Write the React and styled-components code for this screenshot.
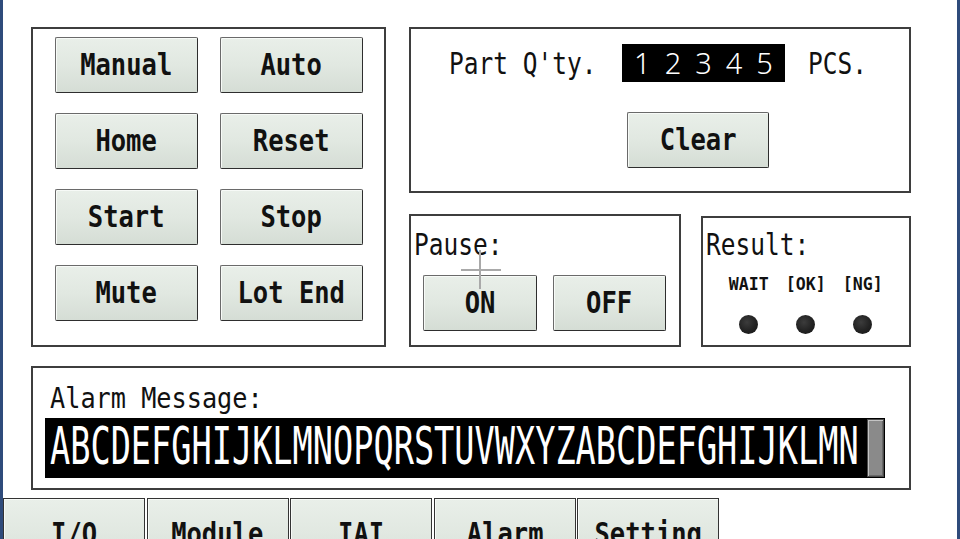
import React from 'react';
import styled, { createGlobalStyle, css } from 'styled-components';

const MONO = `"DejaVu Sans Mono", "Liberation Mono", monospace`;

const Global = createGlobalStyle`
  html, body { margin: 0; padding: 0; background: #fff; }
  body { font-family: ${MONO}; color: #111; }
  * { box-sizing: border-box; }
`;

const squeeze = css`
  display: inline-block;
  white-space: pre;
  font-family: ${MONO};
  transform-origin: ${p => p.$origin || 'center'};
`;

const Screen = styled.div`
  position: relative;
  width: 960px;
  height: 539px;
  overflow: hidden;
  background: #fff;
  border-left: 3px solid #2f4b7b;
  border-right: 3px solid #2f4b7b;
  display: flex;
  flex-direction: column;
`;

const Main = styled.div`
  display: grid;
  grid-template-columns: 355px 502px;
  grid-template-rows: 320px 124px;
  column-gap: 23px;
  row-gap: 19px;
  padding: 27px 0 0 28px;
`;

const Panel = styled.section`
  border: 2px solid #3e3e3e;
  background: #fff;
`;

const ControlPanel = styled(Panel)`
  display: grid;
  grid-template-columns: 143px 143px;
  grid-auto-rows: 56px;
  column-gap: 22px;
  row-gap: 20px;
  padding: 8px 22px 0 22px;
  align-content: start;
`;

const Button = styled.div`
  display: flex;
  align-items: center;
  justify-content: center;
  width: ${p => p.$w || 143}px;
  height: 56px;
  border: 1px solid #6a6a6a;
  border-right-color: #2e2e2e;
  border-bottom-color: #2e2e2e;
  border-radius: 2px;
  background: linear-gradient(#e9efe9 0%, #e1e8e1 50%, #d5ddd5 100%);
  box-shadow: inset 1px 1px 0 #f7faf7;
  overflow: hidden;
`;

const ButtonLabel = styled.span`
  ${squeeze};
  font-size: 30px;
  font-weight: 700;
  line-height: 34px;
  transform: scaleX(0.85);
`;

const RightColumn = styled.div`
  display: flex;
  flex-direction: column;
  gap: 21px;
`;

const QtyPanel = styled(Panel)`
  height: 166px;
  padding: 15px 0 0 38px;
  display: flex;
  flex-direction: column;
`;

const QtyRow = styled.div`
  display: flex;
  align-items: center;
  height: 38px;
`;

const FieldSlot = styled.div`
  width: ${p => p.$w}px;
  margin-left: ${p => p.$ml || 0}px;
  height: 38px;
  display: flex;
  align-items: center;
`;

const FieldLabel = styled.span`
  ${squeeze};
  font-size: 31px;
  line-height: 38px;
  transform: scaleX(0.79);
`;

const Counter = styled.div`
  width: 163px;
  height: 38px;
  margin-left: 25px;
  background: #000;
  color: #fff;
  display: flex;
  align-items: center;
  justify-content: center;
`;

const Digits = styled.span`
  font-family: "Noto Sans", "DejaVu Sans", sans-serif;
  font-weight: 300;
  font-size: 29px;
  line-height: 38px;
  letter-spacing: 14px;
  padding-left: 14px;
  white-space: pre;
`;

const ClearWrap = styled.div`
  margin: 30px 0 0 178px;
`;

const BottomRow = styled.div`
  display: flex;
  gap: 20px;
  flex: 1;
`;

const PausePanel = styled(Panel)`
  width: 272px;
  padding: 8px 0 0 3px;
  display: flex;
  flex-direction: column;
`;

const ResultPanel = styled(Panel)`
  width: 210px;
  margin-top: 2px;
  padding: 6px 0 0 3px;
  display: flex;
  flex-direction: column;
`;

const PanelTitle = styled.div`
  height: 40px;
  display: flex;
  align-items: center;
`;

const PauseButtons = styled.div`
  display: flex;
  gap: 16px;
  margin: 11px 0 0 9px;
`;

const Lamps = styled.div`
  display: grid;
  grid-template-columns: repeat(3, 57px);
  padding-left: 14px;
  margin-top: 10px;
  row-gap: 21px;
  justify-items: center;
`;

const LampLabel = styled.span`
  ${squeeze};
  font-size: 18px;
  font-weight: 700;
  line-height: 20px;
  transform: scaleX(0.92);
`;

const Lamp = styled.div`
  width: 19px;
  height: 19px;
  border-radius: 50%;
  background: radial-gradient(circle at 42% 38%, #3c3c3c 0%, #222 55%, #141414 100%);
`;

const AlarmPanel = styled(Panel)`
  grid-column: 1 / span 2;
  padding: 12px 0 0 12px;
  display: flex;
  flex-direction: column;
`;

const AlarmTitle = styled.div`
  height: 36px;
  padding-left: 5px;
  display: flex;
  align-items: center;
`;

const AlarmLabel = styled.span`
  ${squeeze};
  font-size: 29px;
  line-height: 36px;
  transform: scaleX(0.87);
`;

const AlarmBar = styled.div`
  margin-top: 2px;
  width: 840px;
  height: 60px;
  background: #000;
  display: flex;
  align-items: stretch;
  padding: 1px 1px 1px 5px;
`;

const AlarmTextArea = styled.div`
  flex: 1;
  min-width: 0;
  display: flex;
  align-items: center;
  padding-bottom: 2px;
`;

const AlarmText = styled.span`
  ${squeeze};
  color: #fff;
  font-size: 33.6px;
  line-height: 36px;
  transform: scaleY(1.55);
`;

const ScrollThumb = styled.div`
  width: 17px;
  background: #8a8a8a;
  border: 1px solid #4a4a4a;
  box-shadow: inset 1px 1px 0 #c4c4c4, inset -1px -1px 0 #6a6a6a;
`;

const TabBar = styled.nav`
  display: flex;
  gap: 1.6px;
  margin-top: 8px;
`;

const Tab = styled.div`
  width: 142px;
  height: 70px;
  flex: none;
  display: flex;
  align-items: center;
  justify-content: center;
  border: 1px solid #333;
  border-bottom: none;
  background: linear-gradient(#e9efe9 0%, #e1e8e1 50%, #d5ddd5 100%);
  box-shadow: inset 1px 1px 0 #f7faf7;
`;

const Crosshair = styled.div`
  position: absolute;
  left: 458px;
  top: 250px;
  width: 40px;
  height: 39px;
  pointer-events: none;
  &::before {
    content: '';
    position: absolute;
    left: 18px;
    top: 0;
    width: 2px;
    height: 39px;
    background: #a9a9a9;
  }
  &::after {
    content: '';
    position: absolute;
    left: 0;
    top: 19px;
    width: 40px;
    height: 2px;
    background: #a9a9a9;
  }
`;

const controls = ['Manual', 'Auto', 'Home', 'Reset', 'Start', 'Stop', 'Mute', 'Lot End'];
const tabs = ['I/O', 'Module', 'IAI', 'Alarm', 'Setting'];
const lamps = ['WAIT', '[OK]', '[NG]'];

export default function App() {
  return (
    <>
      <Global />
      <Screen>
        <Main>
          <ControlPanel>
            {controls.map(c => (
              <Button key={c}>
                <ButtonLabel>{c}</ButtonLabel>
              </Button>
            ))}
          </ControlPanel>

          <RightColumn>
            <QtyPanel>
              <QtyRow>
                <FieldSlot $w={148}>
                  <FieldLabel $origin="left">Part Q'ty.</FieldLabel>
                </FieldSlot>
                <Counter>
                  <Digits>12345</Digits>
                </Counter>
                <FieldSlot $w={54} $ml={23}>
                  <FieldLabel $origin="left">PCS.</FieldLabel>
                </FieldSlot>
              </QtyRow>
              <ClearWrap>
                <Button $w={142}>
                  <ButtonLabel>Clear</ButtonLabel>
                </Button>
              </ClearWrap>
            </QtyPanel>

            <BottomRow>
              <PausePanel>
                <PanelTitle>
                  <FieldLabel $origin="left">Pause:</FieldLabel>
                </PanelTitle>
                <PauseButtons>
                  <Button $w={114}><ButtonLabel>ON</ButtonLabel></Button>
                  <Button $w={113}><ButtonLabel>OFF</ButtonLabel></Button>
                </PauseButtons>
              </PausePanel>
              <ResultPanel>
                <PanelTitle>
                  <FieldLabel $origin="left">Result:</FieldLabel>
                </PanelTitle>
                <Lamps>
                  {lamps.map(l => <LampLabel key={l}>{l}</LampLabel>)}
                  {lamps.map(l => <Lamp key={l + 'd'} />)}
                </Lamps>
              </ResultPanel>
            </BottomRow>
          </RightColumn>

          <AlarmPanel>
            <AlarmTitle>
              <AlarmLabel $origin="left">Alarm Message:</AlarmLabel>
            </AlarmTitle>
            <AlarmBar>
              <AlarmTextArea>
                <AlarmText>ABCDEFGHIJKLMNOPQRSTUVWXYZABCDEFGHIJKLMN</AlarmText>
              </AlarmTextArea>
              <ScrollThumb />
            </AlarmBar>
          </AlarmPanel>
        </Main>

        <TabBar>
          {tabs.map(t => (
            <Tab key={t}>
              <ButtonLabel>{t}</ButtonLabel>
            </Tab>
          ))}
        </TabBar>

        <Crosshair />
      </Screen>
    </>
  );
}
